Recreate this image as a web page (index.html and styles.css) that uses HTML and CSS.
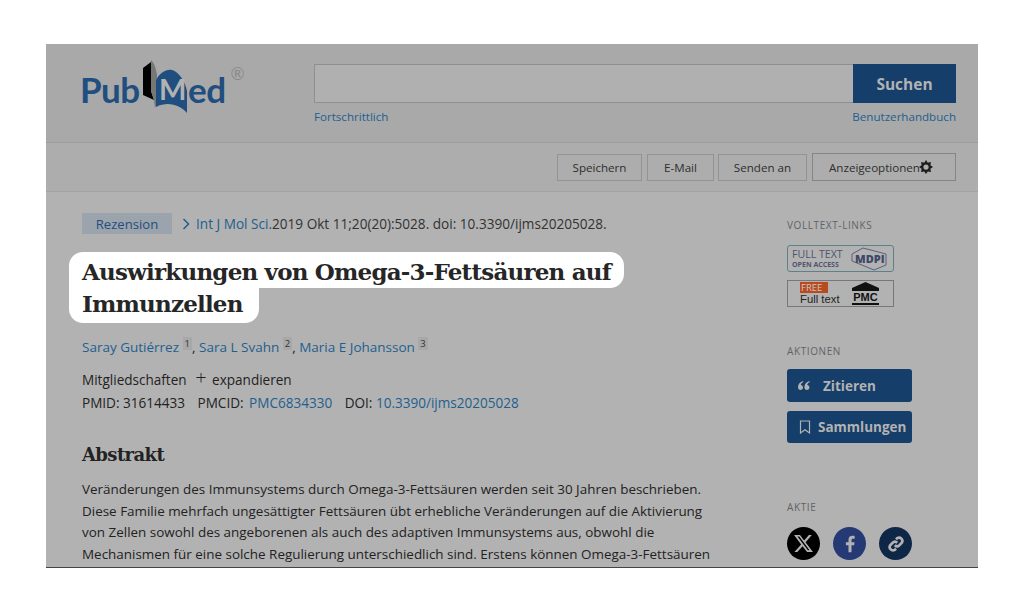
FILE: index.html
```html
<!DOCTYPE html>
<html lang="de">

<head>
    <meta charset="UTF-8">
    <meta name="viewport" content="width=device-width, initial-scale=1.0">
    <title>PubMed</title>
    <link rel="stylesheet" href="styles.css">
</head>

<body>
    <div class="screen">
        <header class="top">
            <div class="logo">
                <span>Pub</span>
                <svg class="book" width="46" height="55" viewBox="0 0 46 55">
                    <path d="M1 9 L9 3 L9 32 L12 41 L1 36 Z" fill="#000" />
                    <path d="M9 1 C13 5 14 10 15 16 L15 44 L13 49 L12 41 L9 32 Z" fill="#777" />
                    <path d="M14 22 C17 14 24 10 30 11 C37 13 43 22 45 32 L45 54 C38 46 26 42 14 48 Z" fill="#1f4e7f" />
                    <text x="17" y="41" class="book-m">M</text>
                </svg>
                <span>ed</span>
                <span class="reg">®</span>
            </div>
            <div class="search">
                <div class="search-row">
                    <div class="search-box"></div>
                    <div class="search-btn">Suchen</div>
                </div>
                <div class="search-links">
                    <a>Fortschrittlich</a>
                    <a>Benutzerhandbuch</a>
                </div>
            </div>
        </header>

        <div class="toolbar">
            <div class="tool">Speichern</div>
            <div class="tool tool-mail">E-Mail</div>
            <div class="tool tool-send">Senden an</div>
            <div class="tool tool-opt">Anzeigeoptionen
                <svg class="gear" width="14" height="14" viewBox="0 0 24 24">
                    <path fill-rule="evenodd" fill="#1c1c1c" d="M12 0 L15 4.5 L20.5 3.5 L19.5 9 L24 12 L19.5 15 L20.5 20.5 L15 19.5 L12 24 L9 19.5 L3.5 20.5 L4.5 15 L0 12 L4.5 9 L3.5 3.5 L9 4.5 Z M12 7.5 A4.5 4.5 0 1 0 12 16.5 A4.5 4.5 0 1 0 12 7.5 Z" />
                </svg>
            </div>
        </div>

        <div class="main">
            <div class="article">
                <div class="cite-line">
                    <span class="tag">Rezension</span>
                    <svg class="chev" width="8" height="12" viewBox="0 0 8 12">
                        <path d="M1.5 1 L6.5 6 L1.5 11" fill="none" stroke="#1f5f8f" stroke-width="1.5" />
                    </svg>
                    <span><a>Int J Mol Sci.</a>2019 Okt 11;20(20):5028. doi: 10.3390/ijms20205028.</span>
                </div>
                <h1 class="title">
                    <span class="title-one">Auswirkungen von Omega-3-Fettsäuren auf</span>
                    <span class="title-two">Immunzellen</span>
                </h1>
                <div class="authors">
                    <a>Saray Gutiérrez</a> <sup>1</sup>, <a>Sara L Svahn</a> <sup>2</sup>, <a>Maria E Johansson</a> <sup>3</sup>
                </div>
                <div class="meta meta-first">Mitgliedschaften <span class="plus">+</span> expandieren</div>
                <div class="meta">
                    <span class="id-item">PMID: 31614433</span>
                    <span class="id-item">PMCID: <a>PMC6834330</a></span>
                    <span>DOI: <a>10.3390/ijms20205028</a></span>
                </div>
                <h2 class="abs-head">Abstrakt</h2>
                <p class="abs-text">Veränderungen des Immunsystems durch Omega-3-Fettsäuren werden seit 30 Jahren beschrieben.<br>Diese Familie mehrfach ungesättigter Fettsäuren übt erhebliche Veränderungen auf die Aktivierung<br>von Zellen sowohl des angeborenen als auch des adaptiven Immunsystems aus, obwohl die<br>Mechanismen für eine solche Regulierung unterschiedlich sind. Erstens können Omega-3-Fettsäuren</p>
            </div>

            <aside class="side">
                <div class="side-head">VOLLTEXT-LINKS</div>
                <div class="badge badge-mdpi">
                    <div class="mdpi-text"><b>FULL TEXT</b><i>OPEN ACCESS</i></div>
                    <svg width="38" height="25" viewBox="0 0 38 25">
                        <path d="M1 8 L12 2 L35 8 L35 19 L23 24 L1 15 Z" fill="none" stroke="#5a6080" stroke-width="1" />
                        <text x="4" y="17" class="mdpi-logo">MDPI</text>
                    </svg>
                </div>
                <div class="badge badge-pmc">
                    <div class="pmc-left"><span class="free">FREE</span><span class="ft">Full text</span></div>
                    <div class="pmc-logo">
                        <svg width="27" height="9" viewBox="0 0 27 9">
                            <path d="M13.5 0 L27 6 L27 9 L0 9 L0 6 Z" fill="#111" />
                        </svg>
                        <span>PMC</span>
                    </div>
                </div>

                <div class="side-head head-actions">AKTIONEN</div>
                <div class="act">
                    <svg width="12" height="9" viewBox="0 0 12 9">
                        <path fill="#b2b2b2" d="M5 0 C2 1 0 3 0 6 C0 8 1 9 2.5 9 C4 9 5 8 5 6.5 C5 5 4 4 2.8 4 C3 2.6 4 1.6 5.4 1 Z M11.4 0 C8.4 1 6.4 3 6.4 6 C6.4 8 7.4 9 8.9 9 C10.4 9 11.4 8 11.4 6.5 C11.4 5 10.4 4 9.2 4 C9.4 2.6 10.4 1.6 11.8 1 Z" />
                    </svg>
                    <span class="act-label">Zitieren</span>
                </div>
                <div class="act act-save">
                    <svg width="12" height="14" viewBox="0 0 12 14">
                        <path d="M1.5 1 H10.5 V13 L6 9.8 L1.5 13 Z" fill="none" stroke="#b2b2b2" stroke-width="1.2" />
                    </svg>
                    <span class="act-label">Sammlungen</span>
                </div>

                <div class="side-head head-share">AKTIE</div>
                <div class="share">
                    <div class="circle c-x">
                        <svg width="21" height="21" viewBox="0 0 24 24">
                            <path fill="#b2b2b2" d="M18.2 2.2 H21.5 L14.3 10.5 L22.8 21.8 H16.1 L10.9 15 L4.9 21.8 H1.6 L9.3 13 L1.2 2.2 H8 L12.7 8.5 Z M17 19.8 H18.9 L7.1 4.1 H5.1 Z" />
                        </svg>
                    </div>
                    <div class="circle c-f">
                        <svg width="18" height="18" viewBox="0 0 24 24">
                            <path fill="#b2b2b2" d="M14 23 V13.5 H17.5 L18 9.5 H14 V7 C14 5.8 14.4 5 16 5 H18.2 V1.3 C17.6 1.2 16.4 1 15 1 C12 1 10 2.8 10 6.4 V9.5 H6.5 V13.5 H10 V23 Z" />
                        </svg>
                    </div>
                    <div class="circle c-l">
                        <svg width="20" height="20" viewBox="0 0 24 24" fill="none" stroke="#b2b2b2" stroke-width="3.2">
                            <path d="M10.5 13.5 A4 4 0 0 0 16 13.5 L19 10.5 A4 4 0 0 0 13.5 5 L12 6.5" />
                            <path d="M13.5 10.5 A4 4 0 0 0 8 10.5 L5 13.5 A4 4 0 0 0 10.5 19 L12 17.5" />
                        </svg>
                    </div>
                </div>
            </aside>
        </div>
    </div>
</body>

</html>
```

FILE: styles.css
```css
body {
    margin: 0;
    background: #fff;
    font-family: "Open Sans", "Liberation Sans", sans-serif;
    font-size: 14px;
    color: #222;
}

a {
    color: #1f5f8f;
}

.screen {
    width: 932px;
    height: 523px;
    margin: 44px 0 0 46px;
    background: #b2b2b2;
    border-bottom: 1px solid #444;
    overflow: hidden;
}

/* header */
.top {
    height: 99px;
    display: flex;
    background: #a9a9a9;
    border-bottom: 1px solid #9c9c9c;
    box-sizing: border-box;
    padding: 20px 22px 0 36px;
}

.logo {
    width: 234px;
    margin-left: -2px;
    display: flex;
    align-items: flex-start;
    font-family: Lato, "Open Sans", sans-serif;
    font-size: 35px;
    font-weight: 700;
    letter-spacing: -0.5px;
    color: #1f4e7f;
    line-height: 1;
    padding-top: 8px;
}

.logo span:first-child {
    width: 62px;
}

.book {
    margin: -13px 0 0 0;
    flex: none;
}

.book-m {
    font-size: 29px;
    font-weight: 700;
    letter-spacing: 0;
    fill: #b2b2b2;
}

.reg {
    font-size: 17px;
    font-weight: 400;
    letter-spacing: 0;
    color: #8a8a8a;
    margin: -7px 0 0 5px;
}

.search {
    flex: 1;
}

.search-row {
    display: flex;
    height: 39px;
}

.search-box {
    flex: 1;
    background: #b0b0b0;
    border: 1px solid #8f8f8f;
    border-right: none;
}

.search-btn {
    width: 103px;
    background: #153e6b;
    color: #b2b2b2;
    font-weight: 700;
    font-size: 15.5px;
    display: flex;
    align-items: center;
    justify-content: center;
}

.search-links {
    display: flex;
    justify-content: space-between;
    font-size: 11.6px;
    margin-top: 6px;
    line-height: 16px;
}

/* buttons under the header */
.toolbar {
    height: 49px;
    box-sizing: border-box;
    background: #adadad;
    border-bottom: 1px solid #a3a3a3;
    display: flex;
    justify-content: flex-end;
    align-items: center;
    gap: 4px;
    padding: 0 22px 0 0;
}

.tool {
    height: 27px;
    box-sizing: border-box;
    width: 85px;
    border: 1px solid #939393;
    display: flex;
    align-items: center;
    justify-content: center;
    font-size: 11.6px;
    color: #2e2e2e;
}

.tool-mail {
    width: 67px;
    margin-left: 1px;
}

.tool-send {
    width: 89px;
}

.tool-opt {
    width: 144px;
    height: 28px;
    margin-left: 1px;
    padding-right: 6px;
    border-color: #858585;
}

.gear {
    margin-left: -1px;
}

/* main column */
.main {
    display: flex;
    padding: 0 0 0 36px;
}

.article {
    width: 705px;
    flex: none;
}

.cite-line {
    display: flex;
    align-items: center;
    margin-top: 21px;
    height: 21px;
    font-size: 13.6px;
    color: #333;
}

.tag {
    width: 90px;
    height: 21px;
    background: #9ba3ad;
    color: #1f4e7f;
    display: flex;
    align-items: center;
    justify-content: center;
    font-size: 13.1px;
}

.chev {
    margin: 0 6px 0 10px;
}

.title {
    margin: 18px 0 0;
    font-family: "DejaVu Serif", serif;
    font-size: 23px;
    letter-spacing: -0.8px;
    font-weight: 700;
    color: #262626;
}

.title span {
    display: block;
    width: fit-content;
    background: #fff;
    margin-left: -13px;
}

.title-one {
    padding: 3px 13px 0;
    line-height: 33px;
    border-radius: 14px 14px 14px 0;
}

.title-two {
    padding: 0 16px 3px 13px;
    line-height: 32px;
    border-radius: 0 0 14px 14px;
}

.authors {
    margin-top: 14px;
    height: 20px;
    font-size: 13.5px;
    line-height: 20px;
}

.authors sup {
    font-size: 9.5px;
    line-height: 0;
    background: #a8a8a8;
    padding: 0 2px;
    color: #333;
}

.meta {
    height: 23px;
    font-size: 13.55px;
    line-height: 23px;
}

.meta-first {
    margin-top: 12px;
}

.plus {
    font-size: 20px;
    font-weight: 300;
    margin: 0 2px 0 5px;
    line-height: 0;
}

.id-item {
    margin-right: 9px;
}

.id-item a {
    margin-left: 2px;
}

.abs-head {
    margin: 28px 0 0;
    font-family: "DejaVu Serif", serif;
    font-size: 18px;
    letter-spacing: -0.6px;
    font-weight: 700;
    line-height: 24px;
}

.abs-text {
    margin: 12px 0 0;
    font-size: 13.45px;
    line-height: 21.5px;
    white-space: nowrap;
}

/* right column */
.side {
    padding-top: 26px;
    width: 130px;
    flex: none;
}

.side-head {
    font-size: 10px;
    line-height: 14px;
    color: #5f6468;
    letter-spacing: 0.6px;
}

.badge {
    width: 107px;
    height: 27px;
    box-sizing: border-box;
    display: flex;
    align-items: center;
}

.badge-mdpi {
    margin-top: 13px;
    border: 1px solid #5b8289;
    border-radius: 3px;
    padding: 0 4px 0 4px;
    justify-content: space-between;
}

.mdpi-text {
    display: flex;
    flex-direction: column;
    color: #4d5570;
}

.mdpi-text b {
    font-size: 10.6px;
    font-weight: 400;
    line-height: 12px;
}

.mdpi-text i {
    font-size: 7px;
    font-weight: 700;
    font-style: normal;
    line-height: 9px;
}

.mdpi-logo {
    font-size: 11px;
    font-weight: 800;
    fill: #3f4766;
}

.badge-pmc {
    margin-top: 8px;
    border: 1px solid #777;
    padding: 0 14px 0 12px;
    justify-content: space-between;
}

.pmc-left {
    display: flex;
    flex-direction: column;
    align-items: flex-start;
}

.free {
    background: #b84a1e;
    color: #c9c9c9;
    font-size: 9.5px;
    line-height: 11px;
    padding: 0 1px;
    width: 28px;
    box-sizing: border-box;
}

.ft {
    font-family: "Liberation Sans", sans-serif;
    font-size: 11.3px;
    line-height: 13px;
    color: #222;
}

.pmc-logo {
    display: flex;
    flex-direction: column;
    align-items: center;
    font-family: "Liberation Sans", sans-serif;
    font-size: 11px;
    font-weight: 700;
    line-height: 12px;
    color: #111;
    border-bottom: 2px solid #111;
    width: 27px;
}

.head-actions {
    margin-top: 37px;
}

.act {
    width: 125px;
    height: 33px;
    margin-top: 11px;
    background: #153e6b;
    border-radius: 3px;
    display: flex;
    align-items: center;
    gap: 13px;
    padding-left: 11px;
    box-sizing: border-box;
    color: #b2b2b2;
}

.act-save {
    height: 32px;
    gap: 7px;
    padding-left: 12px;
    margin-top: 9px;
}

.act-label {
    font-size: 13.5px;
    font-weight: 700;
}

.head-share {
    margin-top: 57px;
}

.share {
    display: flex;
    gap: 13px;
    margin-top: 13px;
}

.circle {
    width: 33px;
    height: 33px;
    border-radius: 50%;
    display: flex;
    align-items: center;
    justify-content: center;
}

.c-x {
    background: #000;
}

.c-f {
    background: #253a74;
}

.c-l {
    background: #0f2747;
}
```
